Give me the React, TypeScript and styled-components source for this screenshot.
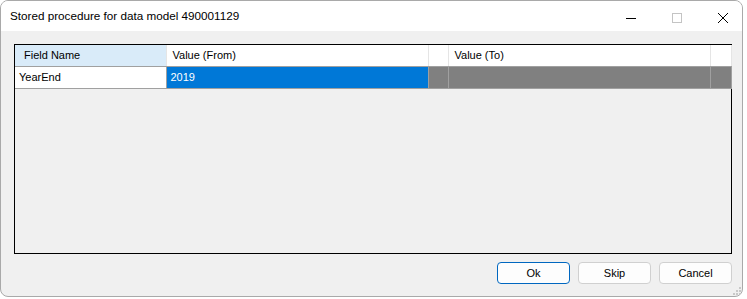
import React from 'react'
import styled, { createGlobalStyle } from 'styled-components'

const GlobalStyle = createGlobalStyle`
  html, body {
    margin: 0;
    padding: 0;
    background: #ffffff;
  }
  body {
    font-family: 'Liberation Sans', Arial, sans-serif;
  }
`

const uiFont = `'Liberation Sans', Arial, sans-serif`

const columns = [
  { title: 'Field Name', width: 151, selected: true, indent: 9 },
  { title: 'Value (From)', width: 262, indent: 6 },
  { title: '', width: 20, indent: 6 },
  { title: 'Value (To)', width: 262, indent: 6 },
  { title: '', width: 21, indent: 6 },
]

const rows = [{ field: 'YearEnd', from: '2019', to: '' }]

export default function App() {
  return (
    <>
      <GlobalStyle />
      <Window>
        <TitleBar>
          <Title>Stored procedure for data model 490001129</Title>
          <Caption>
            <CaptionButton aria-label="Minimize">
              <svg width="10" height="10" viewBox="0 0 10 10">
                <path d="M0 5.5h10" stroke="#000" strokeWidth="1" />
              </svg>
            </CaptionButton>
            <CaptionButton aria-label="Maximize">
              <svg width="10" height="10" viewBox="0 0 10 10">
                <rect x="0.5" y="0.5" width="9" height="9" fill="none" stroke="#c4c4c4" />
              </svg>
            </CaptionButton>
            <CaptionButton aria-label="Close">
              <svg width="10" height="10" viewBox="0 0 10 10">
                <path d="M0 0L10 10M10 0L0 10" stroke="#000" strokeWidth="1" />
              </svg>
            </CaptionButton>
          </Caption>
        </TitleBar>
        <Body>
          <Grid>
            <GridTable>
              <colgroup>
                {columns.map((c, i) => (
                  <col key={i} style={{ width: c.width }} />
                ))}
              </colgroup>
              <thead>
                <tr>
                  {columns.map((c, i) => (
                    <HeadCell key={i} selected={c.selected} indent={c.indent}>
                      {c.title}
                    </HeadCell>
                  ))}
                </tr>
              </thead>
              <tbody>
                {rows.map((r) => (
                  <tr key={r.field}>
                    <Cell kind="plain">{r.field}</Cell>
                    <Cell kind="active">{r.from}</Cell>
                    <Cell kind="dim" />
                    <Cell kind="dim">{r.to}</Cell>
                    <Cell kind="dim" />
                  </tr>
                ))}
              </tbody>
            </GridTable>
          </Grid>
          <Footer>
            <Button primary>Ok</Button>
            <Button>Skip</Button>
            <Button>Cancel</Button>
          </Footer>
          <Grip>
            <svg width="10" height="10" viewBox="0 0 10 10">
              {[
                [8, 0],
                [8, 3],
                [5, 3],
                [8, 6],
                [5, 6],
                [2, 6],
              ].map(([x, y], i) => (
                <rect key={i} x={x} y={y + 2} width="2" height="2" fill="#c8c8c8" />
              ))}
            </svg>
          </Grip>
        </Body>
      </Window>
    </>
  )
}

const Window = styled.div`
  position: relative;
  width: 743px;
  height: 297px;
  box-sizing: border-box;
  border: 1px solid #a9a9a9;
  border-radius: 8px;
  overflow: hidden;
  display: flex;
  flex-direction: column;
  background: #f0f0f0;
`

const TitleBar = styled.div`
  height: 30px;
  background: #ffffff;
  display: flex;
  align-items: center;
  justify-content: space-between;
  flex-shrink: 0;
`

const Title = styled.div`
  padding-left: 9px;
  padding-bottom: 2px;
  font-family: ${uiFont};
  font-size: 11.7px;
  color: #000;
`

const Caption = styled.div`
  display: flex;
  height: 100%;
`

const CaptionButton = styled.div`
  width: 46px;
  height: 100%;
  display: flex;
  align-items: center;
  justify-content: center;
  padding: 3px 0 0 8px;
  box-sizing: border-box;
`

const Body = styled.div`
  position: relative;
  flex: 1;
  display: flex;
  flex-direction: column;
  padding: 13px 11px 0 13px;
`

const Grid = styled.div`
  width: 718px;
  height: 210px;
  box-sizing: border-box;
  border: 1px solid #000;
  background: #f0f0f0;
`

const GridTable = styled.table`
  border-collapse: collapse;
  table-layout: fixed;
  width: 716px;
  font-family: ${uiFont};
  font-size: 11px;
`

const HeadCell = styled.th<{ selected?: boolean; indent: number }>`
  height: 21px;
  padding: 0 0 1px ${(p) => p.indent}px;
  text-align: left;
  font-weight: normal;
  color: #000;
  background: ${(p) => (p.selected ? '#d9ebf9' : '#ffffff')};
  border-right: 1px solid #e5e5e5;
  border-bottom: 1px solid #a0a0a0;
  box-sizing: border-box;
  white-space: nowrap;
  overflow: hidden;
`

const cellColors = {
  plain: { bg: '#ffffff', fg: '#000000' },
  active: { bg: '#0078d7', fg: '#ffffff' },
  dim: { bg: '#808080', fg: '#ffffff' },
}

const Cell = styled.td<{ kind: keyof typeof cellColors }>`
  height: 22px;
  padding: 0 0 1px 4px;
  color: ${(p) => cellColors[p.kind].fg};
  background: ${(p) => cellColors[p.kind].bg};
  border-right: 1px solid #a0a0a0;
  border-bottom: 1px solid #a0a0a0;
  box-sizing: border-box;
  white-space: nowrap;
  overflow: hidden;
`

const Footer = styled.div`
  display: flex;
  justify-content: flex-end;
  gap: 8px;
  margin-top: 8px;
  width: 718px;
`

const Button = styled.button<{ primary?: boolean }>`
  width: 73px;
  height: 22px;
  padding: 0 0 1px;
  box-sizing: border-box;
  font-family: ${uiFont};
  font-size: 11px;
  color: #000;
  background: #fdfdfd;
  border: 1px solid ${(p) => (p.primary ? '#0067c0' : '#d0d0d0')};
  border-radius: 4px;
`

const Grip = styled.div`
  position: absolute;
  right: 1px;
  bottom: 1px;
  width: 10px;
  height: 10px;
  display: flex;
`
